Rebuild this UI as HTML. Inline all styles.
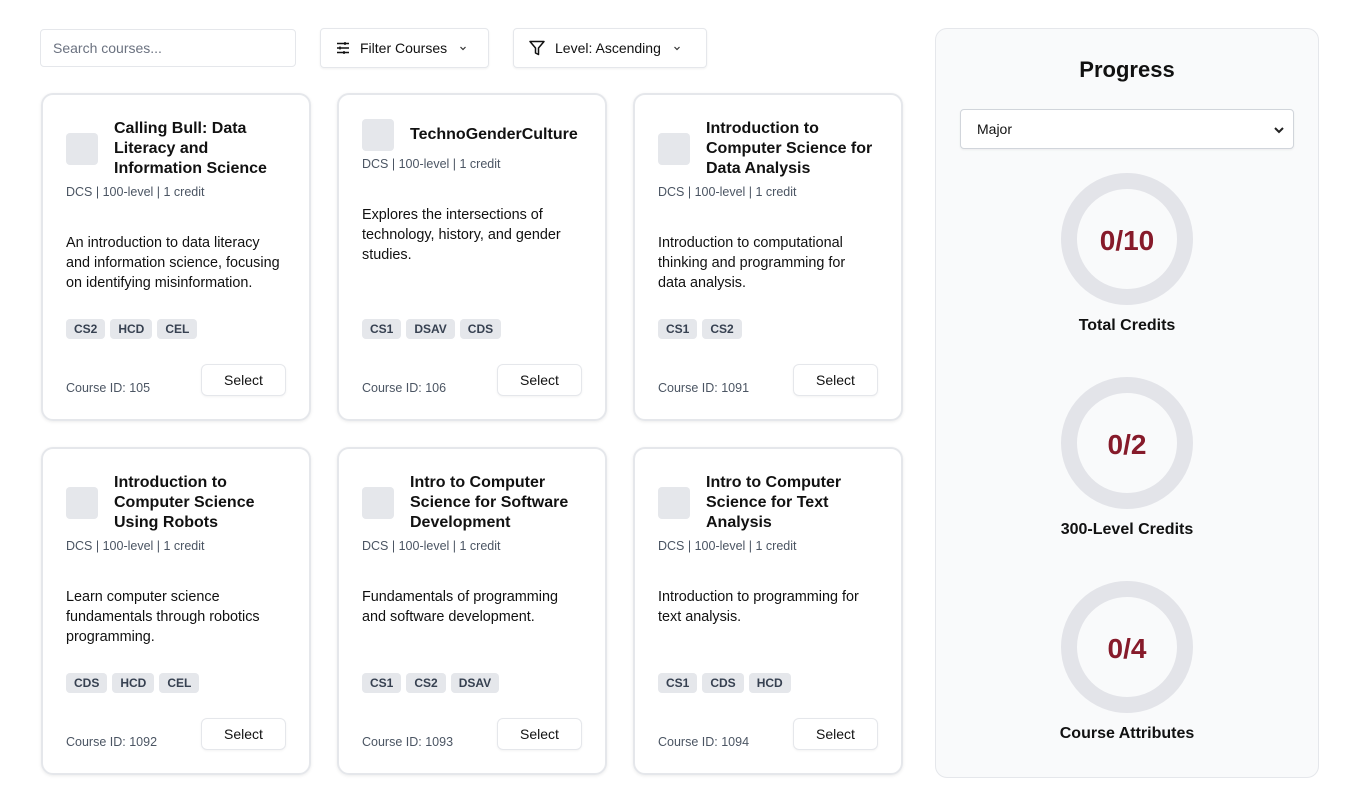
<!DOCTYPE html>
<html><head><meta charset="utf-8"><style>
*{box-sizing:border-box;margin:0;padding:0}
body{width:1354px;height:793px;background:#fff;font-family:"Liberation Sans",Arial,sans-serif;color:#111;position:relative;overflow:hidden}
.abs{position:absolute}
.search{left:40px;top:29px;width:256px;height:38px;border:1px solid #e5e7eb;border-radius:4px;font-size:14px;color:#6b7280;padding:10px 12px;line-height:17px}
.btn{top:28px;height:40px;border:1px solid #e5e7eb;border-radius:4px;box-shadow:0 1px 2px rgba(0,0,0,.06);font-size:14px;display:flex;align-items:center;padding-left:14px;gap:9px;color:#111}
.card{width:270px;height:328px;border:2px solid #e5e7eb;border-radius:12px;box-shadow:0 1px 3px rgba(0,0,0,.08);padding:24px 23px 0 23px}
.hd{display:flex;align-items:center;gap:16px}
.ic{width:32px;height:32px;background:#e5e7eb;border-radius:4px;flex:none}
.tt{font-size:16px;font-weight:bold;line-height:20px}
.meta{font-size:12.5px;color:#4b5563;line-height:18px;margin-top:4px}
.desc{font-size:14.4px;line-height:20px;margin-top:32px;color:#111;width:218px}
.tags{position:absolute;left:23px;bottom:80px;display:flex;gap:5px}
.tag{background:#e5e7eb;border-radius:4px;font-size:12px;font-weight:bold;color:#374151;padding:0 8px;height:20px;line-height:20px}
.cid{position:absolute;left:23px;bottom:24px;font-size:12.5px;color:#4b5563}
.sel{position:absolute;right:23px;bottom:23px;width:85px;height:32px;border:1px solid #e5e7eb;border-radius:6px;font-size:14px;text-align:center;line-height:30px;box-shadow:0 1px 2px rgba(0,0,0,.05)}
.panel{left:935px;top:28px;width:384px;height:750px;background:#f9fafb;border:1px solid #e5e7eb;border-radius:12px}
.ring{position:absolute;left:1061px;width:132px;height:132px;border:16px solid #e3e4e9;border-radius:50%;display:flex;align-items:center;justify-content:center;font-size:28px;font-weight:bold;color:#861a2a;padding-top:4px}
.lbl{position:absolute;left:935px;width:384px;text-align:center;font-size:16px;font-weight:bold}
</style></head><body>
<div class="abs search">Search courses...</div>
<div class="abs btn" style="left:320px;width:169px">
<svg width="16" height="16" viewBox="0 0 16 16" fill="none" stroke="#111" stroke-width="1.4"><path d="M2 3.5h12M2 8h12M2 12.5h12"/><path d="M10 2v3M5 6.5v3M9 11v3"/></svg>
<span>Filter Courses</span><svg width="10" height="10" viewBox="0 0 10 10" fill="none" stroke="#333" stroke-width="1.2" style="margin-left:2px"><path d="M2.5 4l2.5 2.5L7.5 4"/></svg></div>
<div class="abs btn" style="left:513px;width:194px">
<svg width="18" height="18" viewBox="0 0 18 18" fill="none" stroke="#111" stroke-width="1.5" stroke-linejoin="round"><path d="M2 2.5h14l-5.5 6.5v6.5l-3-1.5v-5z"/></svg>
<span>Level: Ascending</span><svg width="10" height="10" viewBox="0 0 10 10" fill="none" stroke="#333" stroke-width="1.2" style="margin-left:2px"><path d="M2.5 4l2.5 2.5L7.5 4"/></svg></div>

<div class="abs card" style="left:41px;top:93px"><div class="hd"><div class="ic"></div><div class="tt">Calling Bull: Data Literacy and Information Science</div></div><div class="meta">DCS | 100-level | 1 credit</div><div class="desc">An introduction to data literacy and information science, focusing on identifying misinformation.</div><div class="tags"><span class="tag">CS2</span><span class="tag">HCD</span><span class="tag">CEL</span></div><div class="cid">Course ID: 105</div><div class="sel">Select</div></div>
<div class="abs card" style="left:337px;top:93px"><div class="hd"><div class="ic"></div><div class="tt">TechnoGenderCulture</div></div><div class="meta">DCS | 100-level | 1 credit</div><div class="desc">Explores the intersections of technology, history, and gender studies.</div><div class="tags"><span class="tag">CS1</span><span class="tag">DSAV</span><span class="tag">CDS</span></div><div class="cid">Course ID: 106</div><div class="sel">Select</div></div>
<div class="abs card" style="left:633px;top:93px"><div class="hd"><div class="ic"></div><div class="tt">Introduction to Computer Science for Data Analysis</div></div><div class="meta">DCS | 100-level | 1 credit</div><div class="desc">Introduction to computational thinking and programming for data analysis.</div><div class="tags"><span class="tag">CS1</span><span class="tag">CS2</span></div><div class="cid">Course ID: 1091</div><div class="sel">Select</div></div>
<div class="abs card" style="left:41px;top:447px"><div class="hd"><div class="ic"></div><div class="tt">Introduction to Computer Science Using Robots</div></div><div class="meta">DCS | 100-level | 1 credit</div><div class="desc">Learn computer science fundamentals through robotics programming.</div><div class="tags"><span class="tag">CDS</span><span class="tag">HCD</span><span class="tag">CEL</span></div><div class="cid">Course ID: 1092</div><div class="sel">Select</div></div>
<div class="abs card" style="left:337px;top:447px"><div class="hd"><div class="ic"></div><div class="tt">Intro to Computer Science for Software Development</div></div><div class="meta">DCS | 100-level | 1 credit</div><div class="desc">Fundamentals of programming and software development.</div><div class="tags"><span class="tag">CS1</span><span class="tag">CS2</span><span class="tag">DSAV</span></div><div class="cid">Course ID: 1093</div><div class="sel">Select</div></div>
<div class="abs card" style="left:633px;top:447px"><div class="hd"><div class="ic"></div><div class="tt">Intro to Computer Science for Text Analysis</div></div><div class="meta">DCS | 100-level | 1 credit</div><div class="desc">Introduction to programming for text analysis.</div><div class="tags"><span class="tag">CS1</span><span class="tag">CDS</span><span class="tag">HCD</span></div><div class="cid">Course ID: 1094</div><div class="sel">Select</div></div>

<div class="abs panel"></div>
<div class="abs" style="left:935px;width:384px;top:56px;text-align:center;font-size:22px;font-weight:bold;line-height:28px">Progress</div>
<div class="abs" style="left:960px;top:109px;width:334px;height:40px;background:#fff;border:1px solid #d1d5db;border-radius:4px;box-shadow:0 1px 2px rgba(0,0,0,.06);font-size:14px;padding:11px 16px;line-height:17px">Major
<svg class="abs" style="right:8px;top:15px" width="12" height="10" viewBox="0 0 12 10" fill="none" stroke="#222" stroke-width="2"><path d="M2 3l4 4 4-4"/></svg></div>
<div class="ring" style="top:173px">0/10</div>
<div class="lbl" style="top:317px">Total Credits</div>
<div class="ring" style="top:377px">0/2</div>
<div class="lbl" style="top:521px">300-Level Credits</div>
<div class="ring" style="top:581px">0/4</div>
<div class="lbl" style="top:725px">Course Attributes</div>
</body></html>
